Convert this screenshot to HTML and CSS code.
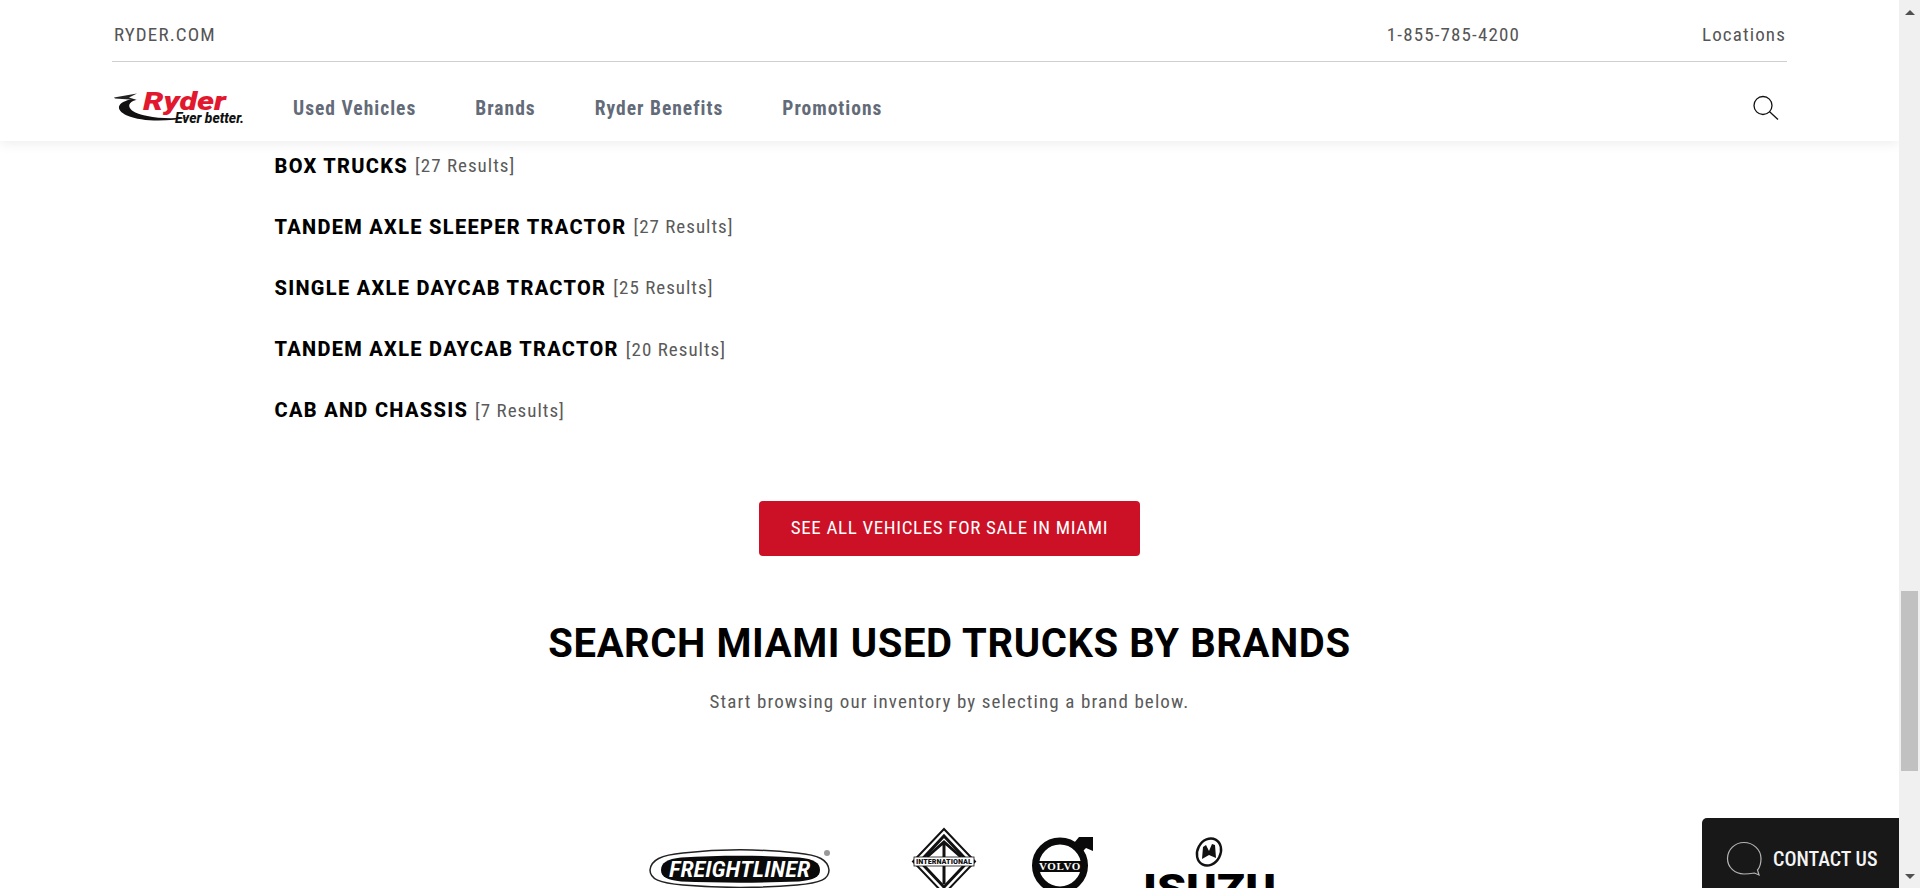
FILE: index.html
```html
<!DOCTYPE html>
<html lang="en">
<head>
<meta charset="utf-8">
<title>Miami Used Trucks</title>
<link rel="stylesheet" href="styles.css">
</head>
<body>
<div class="window">
  <div class="page">
    <header class="site-header">
      <div class="top-bar">
        <a class="top-link">RYDER.COM</a>
        <a class="top-link phone">1-855-785-4200</a>
        <a class="top-link">Locations</a>
      </div>
      <nav class="main-nav">
        <svg class="ryder-logo" viewBox="0 0 132 32" width="132" height="32">
          <path d="M1 5.5 L24 1.5 L16 5.5 L24 8 L2 6.6Z" fill="#222"/>
          <path d="M20 7 C3 10 2 18 14 23.5 C30 30 54 30 78 25 C52 28 28 25 19 18.5 C14 14 16 10 23 8Z" fill="#111"/>
          <text x="30" y="18" textLength="83" lengthAdjust="spacingAndGlyphs" class="ryder-word">Ryder</text>
          <text x="62" y="31" textLength="69" lengthAdjust="spacingAndGlyphs" class="ryder-tag">Ever better.</text>
        </svg>
        <a class="nav-link">Used Vehicles</a>
        <a class="nav-link">Brands</a>
        <a class="nav-link">Ryder Benefits</a>
        <a class="nav-link">Promotions</a>
        <svg class="search-icon" viewBox="0 0 28 26" width="28" height="26">
          <circle cx="11" cy="10.5" r="9" fill="none" stroke="#111" stroke-width="1.3"/>
          <path d="M17.6 16.8 L26 24.5" stroke="#111" stroke-width="1.3" fill="none"/>
        </svg>
      </nav>
    </header>
    <main class="content">
      <ul class="type-list">
        <li class="type-row"><b class="type-name">BOX TRUCKS</b> <span class="type-count">[27 Results]</span></li>
        <li class="type-row"><b class="type-name">TANDEM AXLE SLEEPER TRACTOR</b> <span class="type-count">[27 Results]</span></li>
        <li class="type-row"><b class="type-name">SINGLE AXLE DAYCAB TRACTOR</b> <span class="type-count">[25 Results]</span></li>
        <li class="type-row"><b class="type-name">TANDEM AXLE DAYCAB TRACTOR</b> <span class="type-count">[20 Results]</span></li>
        <li class="type-row"><b class="type-name">CAB AND CHASSIS</b> <span class="type-count">[7 Results]</span></li>
      </ul>
      <div class="cta-wrap"><a class="cta">SEE ALL VEHICLES FOR SALE IN MIAMI</a></div>
      <h2 class="brands-title">SEARCH MIAMI USED TRUCKS BY BRANDS</h2>
      <p class="brands-sub">Start browsing our inventory by selecting a brand below.</p>
      <div class="brands">
        <svg class="brand freightliner" viewBox="0 0 182 37" width="182" height="37">
          <path d="M34 3 C70 -1 112 -1 148 3 C170 5 179 10 180 20 C180 29 172 33 148 35 C112 38 70 38 34 35 C10 33 1 29 1 20 C2 10 12 5 34 3Z" fill="#fff" stroke="#222" stroke-width="1.5"/>
          <path d="M32 7.5 C70 5 112 5 150 7.5 C165 9 171 13 171 20 C171 27 165 30 150 31.5 C112 33 70 33 32 31.5 C18 30 12 27 12 20 C12 13 18 9 32 7.5Z" fill="#0a0a0a"/>
          <text x="20" y="27" textLength="141" lengthAdjust="spacingAndGlyphs" class="fl-word">FREIGHTLINER</text>
          <circle cx="178" cy="3" r="3" fill="#999"/>
        </svg>
        <svg class="brand international" viewBox="0 0 64 67" width="64" height="67">
          <path d="M32 1 L63 33.5 L32 66 L1 33.5Z" fill="#fff" stroke="#111" stroke-width="2"/>
          <path d="M32 8 L56 33.5 L32 59 L8 33.5Z" fill="#fff" stroke="#111" stroke-width="3"/>
          <path d="M32 14 L32 29 M15 29 L32 14 L49 29 M32 38 L32 56" stroke="#111" stroke-width="3" fill="none"/>
          <rect x="2" y="29" width="60" height="9" fill="#fff" stroke="#111" stroke-width=".8"/>
          <text x="4" y="36" textLength="56" lengthAdjust="spacingAndGlyphs" class="intl-word">INTERNATIONAL</text>
        </svg>
        <svg class="brand volvo" viewBox="0 0 61 66" width="61" height="66">
          <circle cx="28" cy="28.5" r="24.5" fill="none" stroke="#0a0a0a" stroke-width="7"/>
          <path d="M42 6 L47 0 L61 0 L61 14 L54 11 L50 15 Z" fill="#0a0a0a"/>
          <rect x="4" y="24" width="48" height="11" fill="#0a0a0a"/>
          <text x="28" y="33" class="volvo-word">VOLVO</text>
        </svg>
        <svg class="brand isuzu" viewBox="0 0 134 70" width="134" height="70">
          <ellipse cx="67" cy="15" rx="11.5" ry="14" transform="rotate(28 67 15)" fill="#fff" stroke="#111" stroke-width="2.4"/>
          <path d="M60 22 L61 10 L64 8 L67 14 L70 7 L73 8 L74 21 L67 18Z" fill="#111"/>
          <text x="1" y="66" textLength="133" lengthAdjust="spacingAndGlyphs" class="isuzu-word">ISUZU</text>
        </svg>
      </div>
    </main>
    <aside class="contact">
      <svg class="contact-icon" viewBox="0 0 36 36" width="36" height="36">
        <path d="M18 1.5 C9 1.5 1.5 8.5 1.5 17.5 C1.5 26 8.5 33 18 33 C22 33 25 32.6 28.5 32 L33 34 L31.5 29 C34.2 26 35 21.5 35 17.5 C35 8.5 27 1.5 18 1.5Z" fill="none" stroke="#b5b5b5" stroke-width="1.2"/>
      </svg>
      <span class="contact-label">CONTACT US</span>
    </aside>
  </div>
  <div class="scrollbar">
    <span class="arrow-up"></span>
    <span class="thumb"></span>
    <span class="arrow-down"></span>
  </div>
</div>
</body>
</html>
```
FILE: styles.css
```css
* { box-sizing: border-box; }
html, body { margin: 0; padding: 0; height: 888px; overflow: hidden; background: #fff; }
body { font-family: Roboto, "Liberation Sans", sans-serif; color: #000; }
a { text-decoration: none; color: inherit; }
.window { display: flex; height: 888px; }
.page { position: relative; flex: 1; min-width: 0; height: 888px; overflow: hidden; }
.scrollbar { width: 21px; background: #f0f0f0; position: relative; display: flex; flex-direction: column; align-items: center; padding-top: 10px; padding-bottom: 9px; }
.arrow-up { width: 0; height: 0; border-left: 5px solid transparent; border-right: 5px solid transparent; border-bottom: 5px solid #505050; }
.thumb { width: 17px; height: 180px; background: #c1c1c1; margin-top: 576px; }
.arrow-down { width: 0; height: 0; border-left: 5px solid transparent; border-right: 5px solid transparent; border-top: 5px solid #505050; margin-top: auto; }

.site-header { position: relative; z-index: 2; height: 141px; padding: 0 112px; background: #fff; box-shadow: 0 2px 12px rgba(0,0,0,.08); }
.top-bar { display: flex; align-items: center; height: 62px; border-bottom: 1px solid #cfcfcf; padding: 7px 1px 0 2px; }
.top-link { font-size: 19px; letter-spacing: 1.13px; color: #555; font-weight: 400; font-stretch: 75%; }
.top-link.phone { margin-left: auto; margin-right: 182px; }
.main-nav { display: flex; align-items: center; height: 78px; padding: 14px 0 0 1px; }
.ryder-logo { flex: none; margin: 0 48px 0 0; overflow: visible; }
.ryder-word { font: italic 900 25px Roboto, sans-serif; fill: #e2182f; }
.ryder-tag { font: italic 800 14px Roboto, sans-serif; fill: #111; }
.nav-link { font-size: 19.5px; font-weight: 700; font-stretch: 75%; letter-spacing: 1px; color: #636b78; margin-right: 59px; }
.search-icon { margin-left: auto; margin-right: 7px; }

.content { margin-top: -6px; }
.type-list { list-style: none; margin: 0; padding: 0 0 0 274.5px; }
.type-row { height: 61.2px; display: flex; align-items: center; gap: 7px; white-space: pre; }
.type-name { font-size: 20px; font-weight: 800; letter-spacing: 1.3px; color: #000; }
.type-count { font-size: 19px; font-weight: 400; font-stretch: 75%; letter-spacing: 1px; color: #5a5a5a; }
.cta-wrap { display: flex; justify-content: center; margin-top: 60px; }
.cta { display: flex; align-items: center; justify-content: center; width: 381px; height: 55px; padding-bottom: 1px; background: #cc1126; color: #fff; border-radius: 4px; font-size: 19px; font-stretch: 75%; letter-spacing: .65px; }
.brands-title { text-align: center; font-size: 40px; font-weight: 700; letter-spacing: .6px; margin: 64px 0 0; line-height: 47px; color: #000; }
.brands-sub { text-align: center; font-size: 19px; font-weight: 400; font-stretch: 75%; letter-spacing: 1.1px; color: #5a5a5a; margin: 23px 0 0; }
.brands { display: flex; align-items: flex-start; padding-left: 649px; margin-top: 115px; height: 80px; }
.brand { flex: none; overflow: visible; }
.freightliner { margin: 22px 0 0 0; }
.international { margin: 0 0 0 81px; }
.volvo { margin: 9px 0 0 56px; }
.isuzu { margin: 9px 0 0 49px; }
.fl-word { font: italic 600 22px Roboto, sans-serif; font-stretch: 75%; fill: #fff; }
.intl-word { font: 800 7px Roboto, sans-serif; font-stretch: 75%; fill: #111; }
.volvo-word { font: 700 11px "Liberation Serif", serif; fill: #fff; text-anchor: middle; letter-spacing: .6px; }
.isuzu-word { font: 900 40px Roboto, sans-serif; fill: #000; }

.contact { position: absolute; right: 0; bottom: 0; width: 197px; height: 70px; background: #181818; border-top-left-radius: 5px; display: flex; align-items: center; padding: 12px 0 0 24px; gap: 11px; z-index: 3; }
.contact-icon { flex: none; }
.contact-label { color: #f4f4f4; font-size: 20px; font-weight: 500; font-stretch: 75%; }
```
